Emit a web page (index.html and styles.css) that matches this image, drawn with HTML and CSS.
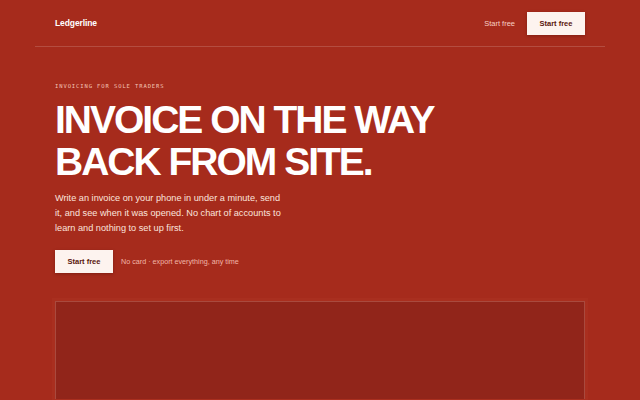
FILE: index.html
```html
<!DOCTYPE html>
<html lang="en">
<head>
<meta charset="utf-8">
<title>Ledgerline</title>
<link rel="stylesheet" href="styles.css">
</head>
<body>
<div class="page">
  <header class="topbar">
    <a class="logo" href="#">Ledgerline</a>
    <nav class="nav">
      <a class="nav-link" href="#">Start free</a>
      <a class="btn btn-small" href="#">Start free</a>
    </nav>
  </header>
  <section class="hero">
    <p class="eyebrow">INVOICING FOR SOLE TRADERS</p>
    <h1 class="headline">INVOICE ON THE WAY<br>BACK FROM SITE.</h1>
    <p class="lede">Write an invoice on your phone in under a minute, send it, and see when it was opened. No chart of accounts to learn and nothing to set up first.</p>
    <div class="cta-row">
      <a class="btn btn-cta" href="#">Start free</a>
      <span class="cta-note">No card · export everything, any time</span>
    </div>
    <div class="panel"></div>
  </section>
</div>
</body>
</html>
```
FILE: styles.css
```css
html, body {
  margin: 0;
  padding: 0;
  background: #a62b1c;
  height: 100%;
  overflow: hidden;
}
body {
  font-family: "Liberation Sans", Arial, sans-serif;
  color: #fff;
}
a { text-decoration: none; }
.page {
  padding: 0 35px;
}
.topbar {
  display: flex;
  align-items: center;
  justify-content: space-between;
  height: 46px;
  padding: 0 20px;
  border-bottom: 1px solid rgba(255, 255, 255, 0.16);
}
.logo {
  color: #fff;
  font-weight: 700;
  font-size: 8.5px;
  letter-spacing: -0.1px;
}
.nav {
  display: flex;
  align-items: center;
  gap: 12px;
}
.nav-link {
  color: #f6cfc4;
  font-size: 7.5px;
}
.btn {
  display: inline-flex;
  align-items: center;
  justify-content: center;
  background: #fdf3ef;
  color: #5a160c;
  font-weight: 700;
  font-size: 7.5px;
  width: 58px;
  height: 23px;
  box-shadow: 0 1px 3px rgba(60, 10, 0, 0.35);
}
.hero {
  padding: 35px 20px 0;
}
.eyebrow {
  margin: 0;
  font-family: "DejaVu Sans Mono", "Liberation Mono", monospace;
  font-size: 5.5px;
  letter-spacing: 0.9px;
  color: #f3c3b6;
  line-height: 8px;
}
.headline {
  margin: 9px 0 0;
  font-size: 39px;
  line-height: 42px;
  font-weight: 700;
  letter-spacing: -2px;
  color: #fff;
}
.lede {
  margin: 8px 0 0;
  max-width: 232px;
  font-size: 9.2px;
  line-height: 15px;
  color: #fbe4dd;
}
.cta-row {
  display: flex;
  align-items: center;
  gap: 8px;
  margin-top: 14px;
}
.cta-note {
  font-size: 7.2px;
  color: #f1b6a8;
}
.panel {
  margin-top: 28px;
  height: 97px;
  background: #91251a;
  border: 1px solid rgba(255, 210, 190, 0.22);
  border-bottom: 0;
  box-shadow: 0 0 0 3px rgba(180, 60, 40, 0.25);
}
```
